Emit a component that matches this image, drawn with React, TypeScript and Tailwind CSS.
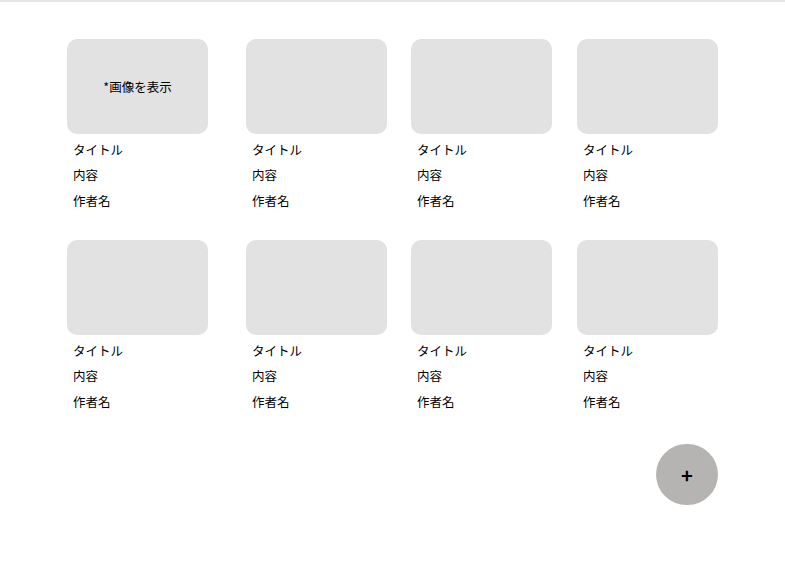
import React from 'react';

const gaps = ['mr-[38px]', 'mr-[24px]', 'mr-[25px]', ''];

const PostCard = ({ showLabel, gap }: { showLabel?: boolean; gap: string }) => (
  <div className={`w-[141px] shrink-0 ${gap}`}>
    <div className="h-[95px] rounded-[10px] bg-[#e2e2e2] flex items-center justify-center pt-[2px]">
      {showLabel && <span className="text-[12.5px] text-black">*画像を表示</span>}
    </div>
    <div className="pl-[6px] text-[12.5px] leading-[20px] text-black">
      <p className="mt-[6px]">タイトル</p>
      <p className="mt-[5px]">内容</p>
      <p className="mt-[6px]">作者名</p>
    </div>
  </div>
);

export default function App() {
  return (
    <div
      className="w-[785px] h-[582px] bg-white border-t-[2px] border-[#e6e6e6] relative"
      style={{ fontFamily: '"Noto Sans CJK JP", "Noto Sans", sans-serif' }}
    >
      <div className="pl-[67px] pt-[37px]">
        <div className="flex">
          {gaps.map((g, i) => (
            <PostCard key={i} gap={g} showLabel={i === 0} />
          ))}
        </div>
        <div className="flex mt-[29px]">
          {gaps.map((g, i) => (
            <PostCard key={i} gap={g} />
          ))}
        </div>
        <div className="w-[651px] flex justify-end mt-[32px]">
          <button className="w-[62px] h-[61px] rounded-full bg-[#b5b4b2] flex items-center justify-center">
            <span className="text-[20px] leading-none text-black font-semibold">+</span>
          </button>
        </div>
      </div>
    </div>
  );
}
